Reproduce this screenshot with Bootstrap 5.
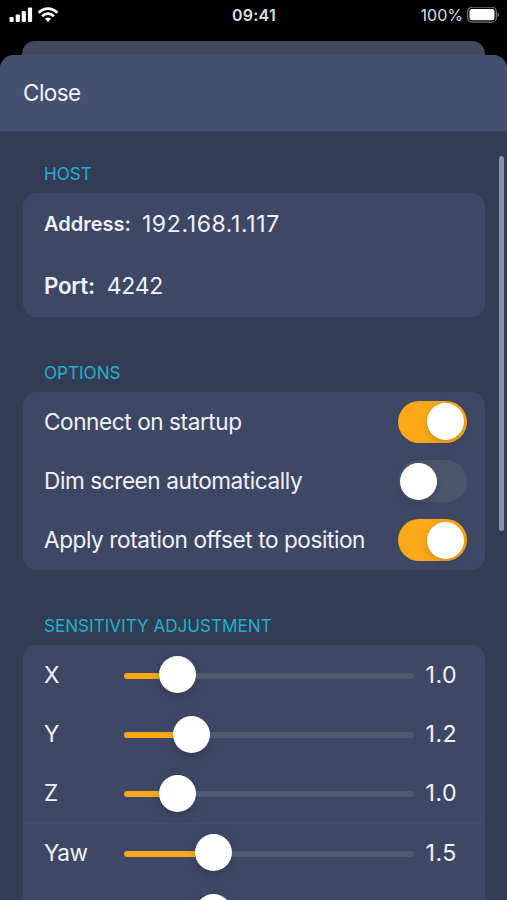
<!DOCTYPE html>
<html lang="en">
<head>
<meta charset="utf-8">
<meta name="viewport" content="width=device-width, initial-scale=1">
<title>Settings</title>
<link href="https://cdn.jsdelivr.net/npm/bootstrap@5.3.0/dist/css/bootstrap.min.css" rel="stylesheet">
<style>
html, body { height: 900px; overflow: hidden; background: #000; }
body { font-family: Inter, "Liberation Sans", sans-serif; font-size: 22.6px; line-height: 28px; letter-spacing: -.43px; color: #eff2fc; }
.status { height: 41px; padding: 0 8px 11px 9px; font-size: 16px; line-height: 20px; letter-spacing: 0; color: #dedede; }
.status-time { font-weight: 600; letter-spacing: .2px; }
.peek { height: 14px; margin: 0 22px; background: #444a5c; border-radius: 13px 13px 0 0; }
.sheet { height: 845px; background: #333c55; border-radius: 14px 14px 0 0; overflow: hidden; }
.sheet-head { height: 76px; background: #44506e; padding: 0 23px; }
.close-btn { color: #eff2fc; font-size: 22.6px; line-height: 28px; letter-spacing: -.6px; }
.sheet-body { padding: 31px 22px 0 23px; }
.group-title { font-size: 17.1px; line-height: 24px; letter-spacing: 0; color: #21b0ce; font-weight: 400; margin: 0 0 7px 21px; }
.group-box { background: #3e4865; border-radius: 14px; }
.group-box + .group-title { margin-top: 44px; }
.host-row { height: 62px; padding: 0 21px 0 21px; }
.set-row { height: 59.35px; padding: 0 18.5px 0 21px; }
.host-key { font-weight: 600; }
.k-addr { font-size: 20px; letter-spacing: 0; margin-right: 11px; }
.k-port { font-size: 22.4px; letter-spacing: -.3px; margin-right: 12px; }
.v-addr { font-size: 23px; letter-spacing: .62px; }
.v-port { font-size: 23px; letter-spacing: -.3px; }
.toggle { appearance: none; width: 69px; height: 42px; border-radius: 21px; background: #4b556c; padding: 2.5px 2.5px; margin: 0; display: flex; flex: none; }
.toggle::before { content: ""; width: 37px; height: 37px; border-radius: 50%; background: #fff; box-shadow: 0 3px 7px rgba(0,0,0,.16); }
.toggle:checked { background: #fba919; justify-content: flex-end; }
.axis { width: 79.5px; }
.slider { width: 290.5px; }
.fill, .rest { height: 6px; margin-top: 2px; }
.fill { background: #fba919; border-radius: 3px 0 0 3px; }
.rest { background: #505a70; border-radius: 0 3px 3px 0; }
.knob { width: 37px; height: 37px; border-radius: 50%; background: #fff; box-shadow: 0 3px 10px rgba(0,0,0,.18); }
.amount { margin-left: 11.5px; font-size: 23.2px; letter-spacing: .5px; }
.ruled { box-shadow: inset 0 1px #434d69; }
.scroll-thumb { position: absolute; right: 3.5px; top: 156px; width: 4.5px; height: 375px; border-radius: 3px; background: #8993a3; }
</style>
<script src="https://cdn.jsdelivr.net/npm/bootstrap@5.3.0/dist/js/bootstrap.bundle.min.js"></script>
</head>
<body class="position-relative">
<div class="status row g-0 align-items-center">
  <div class="col d-flex align-items-center">
    <svg width="24" height="16" viewBox="0 0 24 16" fill="#fff"><rect x=".5" y="10" width="4.200" height="5" rx="1"/><rect x="6.700" y="7.500" width="4.200" height="7.500" rx="1"/><rect x="12.700" y="4" width="4.200" height="11" rx="1"/><rect x="18.900" y=".5" width="4.200" height="14.500" rx="1"/></svg>
    <svg class="ms-1" width="22" height="16" viewBox="0 0 22 16" fill="none" stroke="#fff" stroke-width="2.700"><path d="M1.700 5.700C7 .2 15 .2 20.300 5.700"/><path d="M5.100 9.200C8.400 5.800 13.600 5.800 16.900 9.200"/><path d="M11 15L7.900 11.800Q11 9.200 14.100 11.800Z" fill="#fff" stroke="none"/></svg>
  </div>
  <div class="col-auto status-time">09:41</div>
  <div class="col d-flex align-items-center justify-content-end">
    <span>100%</span>
    <svg class="ms-1" width="32" height="16" viewBox="0 0 32 16"><rect x=".7" y=".2" width="28.600" height="15" rx="4.500" fill="none" stroke="#777" stroke-width="1.200"/><rect x="2.500" y="2" width="25" height="11.300" rx="2.500" fill="#fff"/><path d="M30.500 5.300Q32 6 32 7.700T30.500 10.200Z" fill="#777"/></svg>
  </div>
</div>
<div class="peek"></div>
<main class="sheet">
  <header class="sheet-head d-flex align-items-center"><button type="button" class="close-btn btn p-0 border-0">Close</button></header>
  <div class="sheet-body">
    <h2 class="group-title">HOST</h2>
    <section class="group-box">
      <div class="host-row d-flex align-items-center"><span class="host-key k-addr">Address:</span><span class="v-addr">192.168.1.117</span></div>
      <div class="host-row d-flex align-items-center"><span class="host-key k-port">Port:</span><span class="v-port">4242</span></div>
    </section>
    <h2 class="group-title">OPTIONS</h2>
    <section class="group-box">
      <label class="set-row d-flex align-items-center justify-content-between"><span>Connect on startup</span><input class="toggle" type="checkbox" checked></label>
      <label class="set-row d-flex align-items-center justify-content-between"><span>Dim screen automatically</span><input class="toggle" type="checkbox"></label>
      <label class="set-row d-flex align-items-center justify-content-between"><span>Apply rotation offset to position</span><input class="toggle" type="checkbox" checked></label>
    </section>
    <h2 class="group-title">SENSITIVITY ADJUSTMENT</h2>
    <section class="group-box">
      <div class="set-row d-flex align-items-center"><span class="axis">X</span><div class="slider d-flex align-items-center"><div class="fill" style="width:35px"></div><div class="knob"></div><div class="rest flex-grow-1"></div></div><span class="amount">1.0</span></div>
      <div class="set-row d-flex align-items-center"><span class="axis">Y</span><div class="slider d-flex align-items-center"><div class="fill" style="width:49.5px"></div><div class="knob"></div><div class="rest flex-grow-1"></div></div><span class="amount">1.2</span></div>
      <div class="set-row d-flex align-items-center"><span class="axis">Z</span><div class="slider d-flex align-items-center"><div class="fill" style="width:35px"></div><div class="knob"></div><div class="rest flex-grow-1"></div></div><span class="amount">1.0</span></div>
      <div class="set-row ruled d-flex align-items-center"><span class="axis">Yaw</span><div class="slider d-flex align-items-center"><div class="fill" style="width:71.5px"></div><div class="knob"></div><div class="rest flex-grow-1"></div></div><span class="amount">1.5</span></div>
      <div class="set-row d-flex align-items-center"><span class="axis"></span><div class="slider d-flex align-items-center"><div class="fill" style="width:71.5px"></div><div class="knob"></div><div class="rest flex-grow-1"></div></div></div>
    </section>
  </div>
</main>
<div class="scroll-thumb"></div>
</body>
</html>
